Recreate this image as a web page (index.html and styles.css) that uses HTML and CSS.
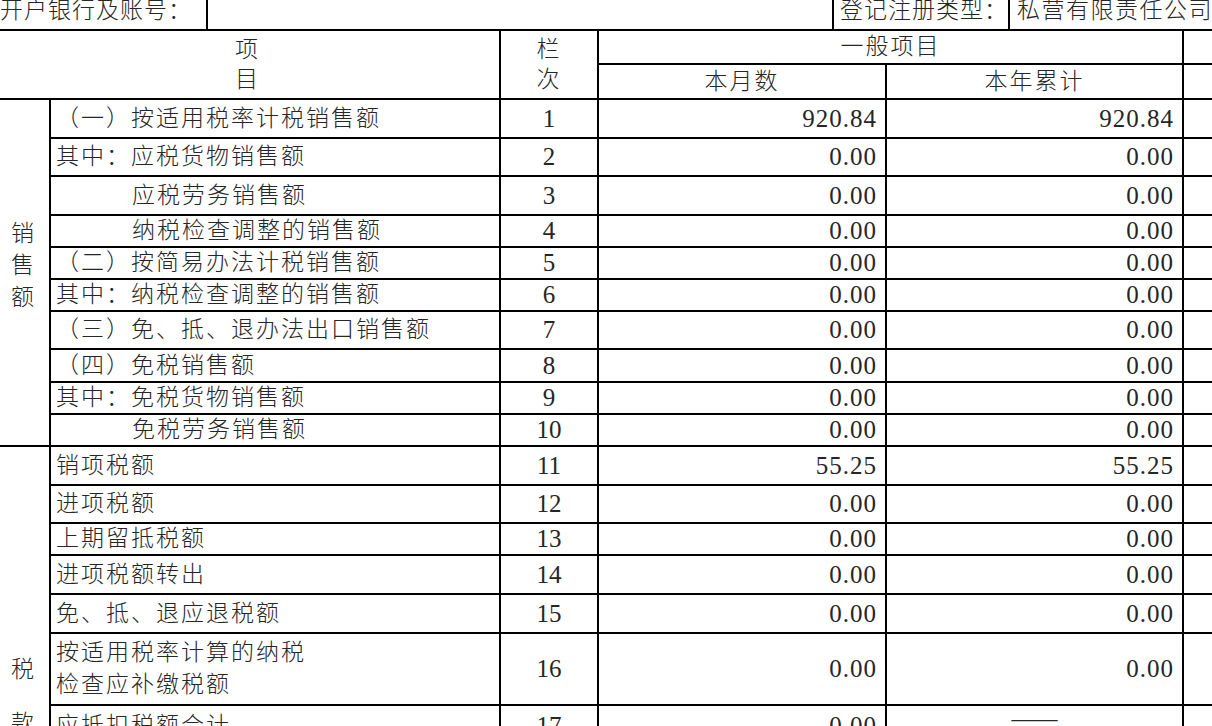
FILE: index.html
```html
<!DOCTYPE html>
<html lang="zh-CN">
<head>
<meta charset="utf-8">
<title>增值税纳税申报表</title>
<link rel="stylesheet" href="styles.css">
</head>
<body>
<div class="sheet">
  <div class="topbar">
    <div class="tb-cell tb-label1">开户银行及账号：</div>
    <div class="tb-cell tb-blank"></div>
    <div class="tb-cell tb-label2">登记注册类型：</div>
    <div class="tb-cell tb-value">私营有限责任公司</div>
  </div>
  <table class="form">
    <colgroup>
      <col class="c-cat">
      <col class="c-item">
      <col class="c-no">
      <col class="c-month">
      <col class="c-year">
      <col class="c-extra">
    </colgroup>
    <tr class="h1">
      <td colspan="2" rowspan="2" class="center vhead">项<br>目</td>
      <td rowspan="2" class="center vhead">栏<br>次</td>
      <td colspan="2" class="center">一般项目</td>
      <td></td>
    </tr>
    <tr class="h2">
      <td class="center">本月数</td>
      <td class="center">本年累计</td>
      <td></td>
    </tr>
    <tr class="r39">
      <td rowspan="10" class="cat cat-sales">销<br>售<br>额</td>
      <td class="item">（一）按适用税率计税销售额</td>
      <td class="no">1</td>
      <td class="num">920.84</td>
      <td class="num">920.84</td>
      <td></td>
    </tr>
    <tr class="r38">
      <td class="item">其中：应税货物销售额</td>
      <td class="no">2</td>
      <td class="num">0.00</td>
      <td class="num">0.00</td>
      <td></td>
    </tr>
    <tr class="r39">
      <td class="item indent">应税劳务销售额</td>
      <td class="no">3</td>
      <td class="num">0.00</td>
      <td class="num">0.00</td>
      <td></td>
    </tr>
    <tr class="r32">
      <td class="item indent">纳税检查调整的销售额</td>
      <td class="no">4</td>
      <td class="num">0.00</td>
      <td class="num">0.00</td>
      <td></td>
    </tr>
    <tr class="r32">
      <td class="item">（二）按简易办法计税销售额</td>
      <td class="no">5</td>
      <td class="num">0.00</td>
      <td class="num">0.00</td>
      <td></td>
    </tr>
    <tr class="r32">
      <td class="item">其中：纳税检查调整的销售额</td>
      <td class="no">6</td>
      <td class="num">0.00</td>
      <td class="num">0.00</td>
      <td></td>
    </tr>
    <tr class="r38">
      <td class="item">（三）免、抵、退办法出口销售额</td>
      <td class="no">7</td>
      <td class="num">0.00</td>
      <td class="num">0.00</td>
      <td></td>
    </tr>
    <tr class="r33">
      <td class="item">（四）免税销售额</td>
      <td class="no">8</td>
      <td class="num">0.00</td>
      <td class="num">0.00</td>
      <td></td>
    </tr>
    <tr class="r32">
      <td class="item">其中：免税货物销售额</td>
      <td class="no">9</td>
      <td class="num">0.00</td>
      <td class="num">0.00</td>
      <td></td>
    </tr>
    <tr class="r32">
      <td class="item indent">免税劳务销售额</td>
      <td class="no">10</td>
      <td class="num">0.00</td>
      <td class="num">0.00</td>
      <td></td>
    </tr>
    <tr class="r39">
      <td rowspan="7" class="cat cat-tax">税<br>款</td>
      <td class="item">销项税额</td>
      <td class="no">11</td>
      <td class="num">55.25</td>
      <td class="num">55.25</td>
      <td></td>
    </tr>
    <tr class="r38">
      <td class="item">进项税额</td>
      <td class="no">12</td>
      <td class="num">0.00</td>
      <td class="num">0.00</td>
      <td></td>
    </tr>
    <tr class="r31">
      <td class="item">上期留抵税额</td>
      <td class="no">13</td>
      <td class="num">0.00</td>
      <td class="num">0.00</td>
      <td></td>
    </tr>
    <tr class="r39">
      <td class="item">进项税额转出</td>
      <td class="no">14</td>
      <td class="num">0.00</td>
      <td class="num">0.00</td>
      <td></td>
    </tr>
    <tr class="r39">
      <td class="item">免、抵、退应退税额</td>
      <td class="no">15</td>
      <td class="num">0.00</td>
      <td class="num">0.00</td>
      <td></td>
    </tr>
    <tr class="r72">
      <td class="item two">按适用税率计算的纳税<br>检查应补缴税额</td>
      <td class="no">16</td>
      <td class="num">0.00</td>
      <td class="num">0.00</td>
      <td></td>
    </tr>
    <tr class="r-last">
      <td class="item">应抵扣税额合计</td>
      <td class="no">17</td>
      <td class="num">0.00</td>
      <td class="center dash">——</td>
      <td></td>
    </tr>
  </table>
</div>
</body>
</html>
```

FILE: styles.css
```css
html, body {
  margin: 0;
  padding: 0;
  background: #fff;
  overflow: hidden;
}

body {
  width: 1212px;
  height: 726px;
  font-family: "Liberation Serif", "Noto Sans CJK SC", serif;
  color: #262626;
}

.sheet {
  width: 1300px;
  margin: -13px 0 0 -6px;
}

.topbar {
  display: flex;
  height: 42px;
  font-family: "Noto Sans CJK SC", sans-serif;
  font-size: 23px;
  letter-spacing: 1px;
  font-weight: 300;
}

.tb-cell {
  box-sizing: border-box;
  display: flex;
  align-items: center;
  border-right: 2px solid #000;
  padding-left: 6px;
  white-space: nowrap;
}

.tb-label1 { width: 214px; }
.tb-blank  { width: 626px; }
.tb-label2 { width: 176px; }
.tb-value  { flex: 1; border-right: none; padding-left: 7px; letter-spacing: 1.5px; }

.form {
  border-collapse: collapse;
  table-layout: fixed;
  width: 1300px;
  font-size: 23px;
  letter-spacing: 2px;
  font-weight: 300;
}

.c-cat   { width: 55px; }
.c-item  { width: 450px; }
.c-no    { width: 98px; }
.c-month { width: 288px; }
.c-year  { width: 297px; }
.c-extra { width: 112px; }

.form td {
  border: 2px solid #000;
  padding: 0;
  white-space: nowrap;
  line-height: 30px;
  vertical-align: middle;
}

.h1 { height: 34px; }
.h2 { height: 35px; }
.r31 { height: 31px; }
.r32 { height: 32px; }
.r33 { height: 33px; }
.r38 { height: 38px; }
.r39 { height: 39px; }
.r72 { height: 72px; }
.r-last { height: 60px; }

.r-last td {
  vertical-align: top;
  padding-top: 5px;
}

.center { text-align: center; }

.vhead { line-height: 34px; }

.item {
  padding-left: 5px !important;
  text-align: left;
}

.item.indent { padding-left: 81px !important; }

.item.two { line-height: 32px !important; }

.no {
  text-align: center;
  font-size: 25px;
  letter-spacing: 0;
}

.num {
  text-align: right;
  font-size: 25px;
  letter-spacing: 1px;
  padding-right: 8px !important;
}

.cat {
  text-align: center;
  letter-spacing: 0;
}

.cat-sales {
  line-height: 32px !important;
  padding-bottom: 14px !important;
}

.cat-tax {
  vertical-align: top !important;
  line-height: 54px !important;
  padding-top: 196px !important;
}

.form .r-last .dash {
  letter-spacing: 0;
  font-size: 23px;
  line-height: 24px;
  padding-top: 1px;
}
```
